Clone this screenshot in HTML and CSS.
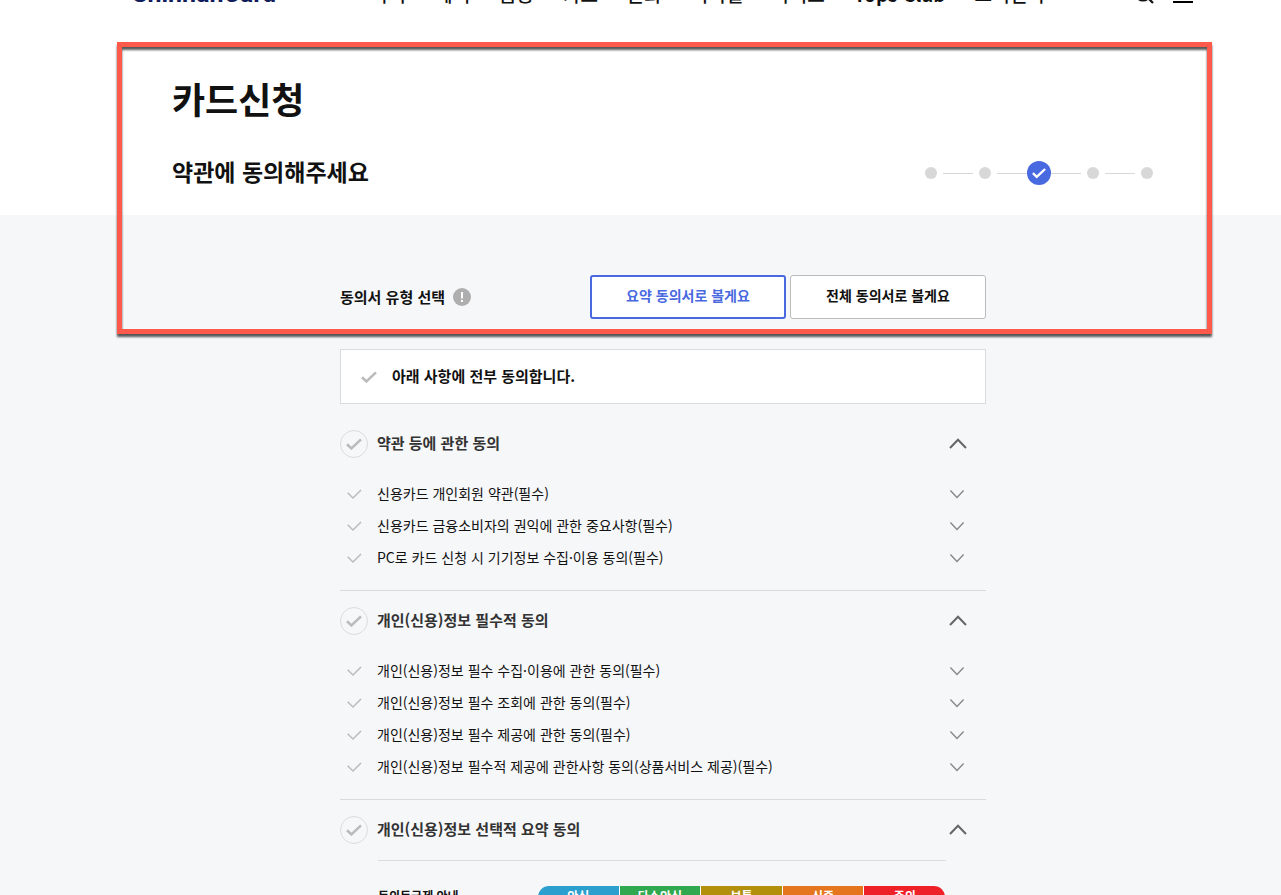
FILE: index.html
```html
<!DOCTYPE html>
<html lang="ko">
<head>
<meta charset="utf-8">
<meta name="viewport" content="width=device-width, initial-scale=1">
<title>카드신청</title>
<link rel="stylesheet" href="styles.css">
</head>
<body>
<svg class="defs" aria-hidden="true">
  <symbol id="check-bold" viewBox="0 0 16 12"><path d="M1 6.2L5.4 10.4L15 1.4" fill="none" stroke="currentColor" stroke-width="2.6"/></symbol>
  <symbol id="check-thin" viewBox="0 0 16 12"><path d="M1.6 4.8L7 10L15 2" fill="none" stroke="currentColor" stroke-width="1.5"/></symbol>
  <symbol id="up" viewBox="0 0 18 12"><path d="M1 10L9 1.8L17 10" fill="none" stroke="currentColor" stroke-width="2"/></symbol>
  <symbol id="down" viewBox="0 0 18 12"><path d="M1.4 2.6L8 9.4L14.6 2.6" fill="none" stroke="currentColor" stroke-width="1.4"/></symbol>
</svg>

<header class="topbar">
  <a class="logo" href="#">ShinhanCard</a>
  <nav class="menu">
    <a href="#">마이</a><a href="#">혜택</a><a href="#">금융</a><a href="#">카드</a><a href="#">문화</a><a href="#">디지털</a><a href="#">라이프</a><a class="club" href="#">Tops Club</a><a href="#">고객센터</a>
  </nav>
  <div class="tools">
    <button type="button" aria-label="검색"><svg width="20" height="20" viewBox="0 0 20 20"><circle cx="9" cy="9" r="7.5" fill="none" stroke="#111" stroke-width="2.2"/><path d="M14 14L19 19" stroke="#111" stroke-width="2.2"/></svg></button>
    <button type="button" aria-label="전체메뉴"><svg width="20" height="18" viewBox="0 0 20 18"><path d="M0 1H20M0 9H20M0 17H20" stroke="#000" stroke-width="2"/></svg></button>
  </div>
</header>

<section class="hero">
  <h1>카드신청</h1>
  <div class="hero-row">
    <h2>약관에 동의해주세요</h2>
    <ol class="steps" aria-label="진행 단계">
      <li></li><li></li>
      <li class="current"><svg width="14" height="12"><use href="#check-bold"/></svg></li>
      <li></li><li></li>
    </ol>
  </div>
</section>

<main class="content">
  <form class="form">
    <div class="type-row">
      <span class="type-label">동의서 유형 선택</span>
      <button class="info" type="button" aria-label="도움말"><svg width="18" height="18" viewBox="0 0 18 18"><circle cx="9" cy="9" r="9" fill="#aeaeae"/><path d="M9 4V10.5M9 12V14" stroke="#fff" stroke-width="2"/></svg></button>
      <div class="type-buttons">
        <button class="choice selected" type="button">요약 동의서로 볼게요</button>
        <button class="choice" type="button">전체 동의서로 볼게요</button>
      </div>
    </div>

    <label class="agree-all">
      <span class="tick"><input type="checkbox"><svg width="16" height="12"><use href="#check-bold"/></svg></span>
      <span class="text">아래 사항에 전부 동의합니다.</span>
    </label>

    <section class="group">
      <div class="group-head">
        <label><span class="tick ring"><input type="checkbox"><svg width="16" height="12"><use href="#check-bold"/></svg></span><span class="text">약관 등에 관한 동의</span></label>
        <button class="toggle" type="button" aria-label="접기"><svg width="18" height="12"><use href="#up"/></svg></button>
      </div>
      <ul class="terms">
        <li><label><span class="tick"><input type="checkbox"><svg width="16" height="12"><use href="#check-thin"/></svg></span><span class="text">신용카드 개인회원 약관(필수)</span></label><button class="toggle" type="button" aria-label="펼치기"><svg width="18" height="12"><use href="#down"/></svg></button></li>
        <li><label><span class="tick"><input type="checkbox"><svg width="16" height="12"><use href="#check-thin"/></svg></span><span class="text">신용카드 금융소비자의 권익에 관한 중요사항(필수)</span></label><button class="toggle" type="button" aria-label="펼치기"><svg width="18" height="12"><use href="#down"/></svg></button></li>
        <li><label><span class="tick"><input type="checkbox"><svg width="16" height="12"><use href="#check-thin"/></svg></span><span class="text">PC로 카드 신청 시 기기정보 수집·이용 동의(필수)</span></label><button class="toggle" type="button" aria-label="펼치기"><svg width="18" height="12"><use href="#down"/></svg></button></li>
      </ul>
    </section>

    <section class="group">
      <div class="group-head">
        <label><span class="tick ring"><input type="checkbox"><svg width="16" height="12"><use href="#check-bold"/></svg></span><span class="text">개인(신용)정보 필수적 동의</span></label>
        <button class="toggle" type="button" aria-label="접기"><svg width="18" height="12"><use href="#up"/></svg></button>
      </div>
      <ul class="terms">
        <li><label><span class="tick"><input type="checkbox"><svg width="16" height="12"><use href="#check-thin"/></svg></span><span class="text">개인(신용)정보 필수 수집·이용에 관한 동의(필수)</span></label><button class="toggle" type="button" aria-label="펼치기"><svg width="18" height="12"><use href="#down"/></svg></button></li>
        <li><label><span class="tick"><input type="checkbox"><svg width="16" height="12"><use href="#check-thin"/></svg></span><span class="text">개인(신용)정보 필수 조회에 관한 동의(필수)</span></label><button class="toggle" type="button" aria-label="펼치기"><svg width="18" height="12"><use href="#down"/></svg></button></li>
        <li><label><span class="tick"><input type="checkbox"><svg width="16" height="12"><use href="#check-thin"/></svg></span><span class="text">개인(신용)정보 필수 제공에 관한 동의(필수)</span></label><button class="toggle" type="button" aria-label="펼치기"><svg width="18" height="12"><use href="#down"/></svg></button></li>
        <li><label><span class="tick"><input type="checkbox"><svg width="16" height="12"><use href="#check-thin"/></svg></span><span class="text">개인(신용)정보 필수적 제공에 관한사항 동의(상품서비스 제공)(필수)</span></label><button class="toggle" type="button" aria-label="펼치기"><svg width="18" height="12"><use href="#down"/></svg></button></li>
      </ul>
    </section>

    <section class="group">
      <div class="group-head">
        <label><span class="tick ring"><input type="checkbox"><svg width="16" height="12"><use href="#check-bold"/></svg></span><span class="text">개인(신용)정보 선택적 요약 동의</span></label>
        <button class="toggle" type="button" aria-label="접기"><svg width="18" height="12"><use href="#up"/></svg></button>
      </div>
      <div class="grades">
        <span>동의등급제 안내</span>
        <ul class="scale">
          <li class="safe">안심</li><li class="fair">다소안심</li><li class="normal">보통</li><li class="careful">신중</li><li class="caution">주의</li>
        </ul>
      </div>
    </section>
  </form>
</main>
<div class="highlight" aria-hidden="true"></div>
</body>
</html>
```
FILE: styles.css
```css
* { box-sizing: border-box; }

body {
  position: relative;
  display: flex;
  flex-direction: column;
  height: 100vh;
  margin: 0;
  overflow: hidden;
  background: #fff;
  color: #111;
  font-family: "Noto Sans CJK KR", "Noto Sans", sans-serif;
  font-size: 14px;
  line-height: 20px;
}

h1, h2, ul, ol { margin: 0; padding: 0; }
ul, ol { list-style: none; }
a { color: inherit; text-decoration: none; }
button { padding: 0; border: 0; background: none; color: inherit; font: inherit; cursor: pointer; }
svg { display: block; flex: none; }
.defs { position: absolute; width: 0; height: 0; }

/* Site header, scrolled mostly out of view */
.topbar {
  display: flex;
  align-items: center;
  flex: none;
  height: 40px;
  margin-top: -26px;
  padding: 0 88px 0 132px;
}
.logo { flex: none; width: 239px; color: #101c5c; font: bold 25px/44px Roboto, sans-serif; }
.menu { display: flex; flex: 1; gap: 29px; font-size: 19px; font-weight: 500; line-height: 22px; white-space: nowrap; }
.club { font-weight: 700; }
.tools { display: flex; align-items: center; gap: 19px; }

.hero {
  flex: none;
  padding: 58px 0 28px 45px;
}
.hero > * { max-width: 982px; margin: 0 auto; }
.hero h1 { font-size: 36px; font-weight: 700; line-height: 52px; }
.hero-row { display: flex; align-items: center; justify-content: space-between; padding-top: 31px; }
.hero h2 { font-size: 23px; font-weight: 700; line-height: 32px; }

.steps { display: flex; gap: 30px; margin: 4px -5px 0 0; }
.steps li { position: relative; display: grid; place-items: center; width: 24px; height: 24px; border-radius: 50%; }
.steps li::before { content: ""; width: 12px; height: 12px; border-radius: 50%; background: #d8d8d8; }
.steps li + li::after { content: ""; position: absolute; top: 12px; right: 100%; width: 30px; height: 1px; background: #d8d8d8; }
.steps .current { background: #4969e1; color: #fff; }
.steps .current::before { display: none; }

.content { flex: 1 0 auto; padding: 60px 0 24px 45px; background: #f6f7f9; }
.form { max-width: 646px; margin: 0 auto; }

.type-row { display: flex; align-items: center; }
.type-label { font-size: 15px; font-weight: 700; }
.info { margin-left: 8px; }
.type-buttons { display: flex; gap: 4px; margin-left: auto; }
.choice { width: 196px; height: 44px; padding-bottom: 4px; border: 1px solid #bbb; border-radius: 3px; background: #fff; font-weight: 700; }
.choice.selected { border: 2px solid #4969e1; color: #4969e1; }

.agree-all {
  display: flex;
  align-items: center;
  gap: 9px;
  height: 55px;
  margin: 30px 0 10px;
  padding-left: 14px;
  border: 1px solid #dadbdd;
  background: #fff;
  font-size: 15px;
  font-weight: 700;
}

.text { padding-bottom: 2px; }
.tick { display: grid; place-items: center; width: 28px; height: 28px; color: #bbb; }
.tick > * { grid-area: 1 / 1; }
.tick input { width: 28px; height: 28px; margin: 0; appearance: none; }
.ring input { border: 1px solid #dcdcde; border-radius: 50%; }

.group { padding: 16px 0; border-top: 1px solid #dadbdd; }
.agree-all + .group { border-top: 0; }
.group label { display: flex; align-items: center; gap: 9px; }
.group-head { display: flex; align-items: center; justify-content: space-between; color: #333; font-size: 15px; font-weight: 700; }
.group-head .toggle { color: #666; }
.toggle { margin-right: 19px; color: #888; }
.terms { padding-top: 20px; }
.terms li { display: flex; align-items: center; justify-content: space-between; height: 32px; }

.grades {
  display: flex;
  align-items: flex-start;
  justify-content: space-between;
  margin: 16px 40px 0 38px;
  padding: 25px 1px 0 0;
  border-top: 1px solid #dadbdd;
  font-size: 12px;
  font-weight: 700;
}
.scale { display: flex; gap: 1px; width: 407px; border-radius: 12px; overflow: hidden; background: #fff; color: #fff; text-align: center; }
.scale li { flex: 1; height: 22px; }
.safe { background: #2b9fcd; }
.fair { background: #2fa84f; }
.normal { background: #b3900c; }
.careful { background: #e5761e; }
.caution { background: #ee2128; }

/* Callout frame drawn over the page */
.highlight {
  position: absolute;
  top: 42px;
  right: 69px;
  left: 117px;
  height: 292px;
  border: 5px solid #ff594b;
  filter: drop-shadow(0 3px 1px rgba(0, 0, 0, 0.65));
  pointer-events: none;
}
```
